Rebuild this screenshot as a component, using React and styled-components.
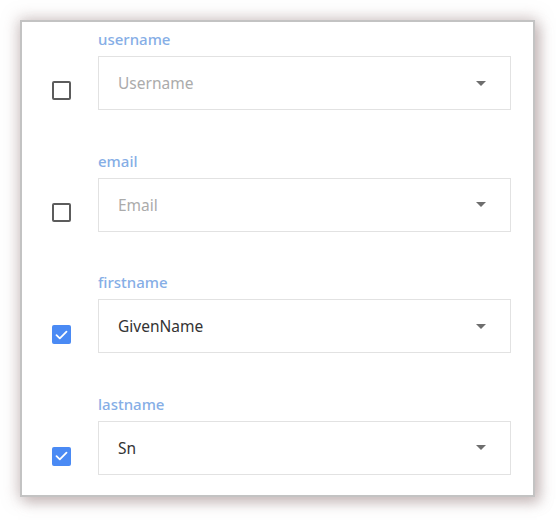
import React from "react";
import styled, { createGlobalStyle } from "styled-components";

const Global = createGlobalStyle`
  html, body { margin: 0; padding: 0; background: #ffffff; }
  body {
    min-height: 520px;
    font-family: "Noto Sans", "Open Sans", sans-serif;
  }
  #root { padding-bottom: 23px; }
`;

const Card = styled.div`
  box-sizing: border-box;
  margin: 20px 0 0 20px;
  width: 515px;
  height: 477px;
  border: 2px solid #c3c3c3;
  background: #ffffff;
  box-shadow: 0 0 14px 2px rgba(165, 145, 145, 0.5), 5px 6px 12px rgba(165, 145, 145, 0.4);
  padding: 7px 22px 0 30px;
  display: flex;
  flex-direction: column;
  gap: 40.5px;
`;

const Row = styled.div`
  display: flex;
  align-items: flex-end;
  gap: 27px;
`;

const CheckCell = styled.div`
  width: 19px;
  padding-bottom: ${(p) => (p.$checked ? 9 : 10)}px;
`;

const Box = styled.div`
  box-sizing: border-box;
  width: 19px;
  height: 19px;
  border-radius: 2px;
  border: ${(p) => (p.$checked ? "none" : "2px solid #5c5c5c")};
  background: ${(p) => (p.$checked ? "#4a8af4" : "transparent")};
  display: flex;
  align-items: center;
  justify-content: center;
`;

const Field = styled.div`
  width: 413px;
  display: flex;
  flex-direction: column;
  gap: 7px;
`;

const Label = styled.div`
  height: 20px;
  line-height: 20px;
  font-size: 15px;
  font-weight: 500;
  color: #86aee6;
`;

const Select = styled.div`
  box-sizing: border-box;
  height: 54px;
  border: 1px solid #e2e2e2;
  display: flex;
  align-items: center;
  padding: 0 24px 0 19px;
`;

const Value = styled.span`
  flex: 1;
  font-size: 15.5px;
  color: ${(p) => (p.$placeholder ? "#ababab" : "#333333")};
`;

const Caret = styled.span`
  width: 0;
  height: 0;
  border-left: 5px solid transparent;
  border-right: 5px solid transparent;
  border-top: 5px solid #6e6e6e;
`;

const fields = [
  { name: "username", text: "Username", placeholder: true, checked: false },
  { name: "email", text: "Email", placeholder: true, checked: false },
  { name: "firstname", text: "GivenName", placeholder: false, checked: true },
  { name: "lastname", text: "Sn", placeholder: false, checked: true },
];

function Check({ checked }) {
  return (
    <Box $checked={checked}>
      {checked && (
        <svg width="13" height="10" viewBox="0 0 13 10">
          <path d="M1.5 5.2 L4.8 8.3 L11.5 1.6" fill="none" stroke="#fff" strokeWidth="1.8" strokeLinecap="round" strokeLinejoin="round" />
        </svg>
      )}
    </Box>
  );
}

export default function App() {
  return (
    <>
      <Global />
      <Card>
        {fields.map((f) => (
          <Row key={f.name}>
            <CheckCell $checked={f.checked}>
              <Check checked={f.checked} />
            </CheckCell>
            <Field>
              <Label>{f.name}</Label>
              <Select>
                <Value $placeholder={f.placeholder}>{f.text}</Value>
                <Caret />
              </Select>
            </Field>
          </Row>
        ))}
      </Card>
    </>
  );
}
